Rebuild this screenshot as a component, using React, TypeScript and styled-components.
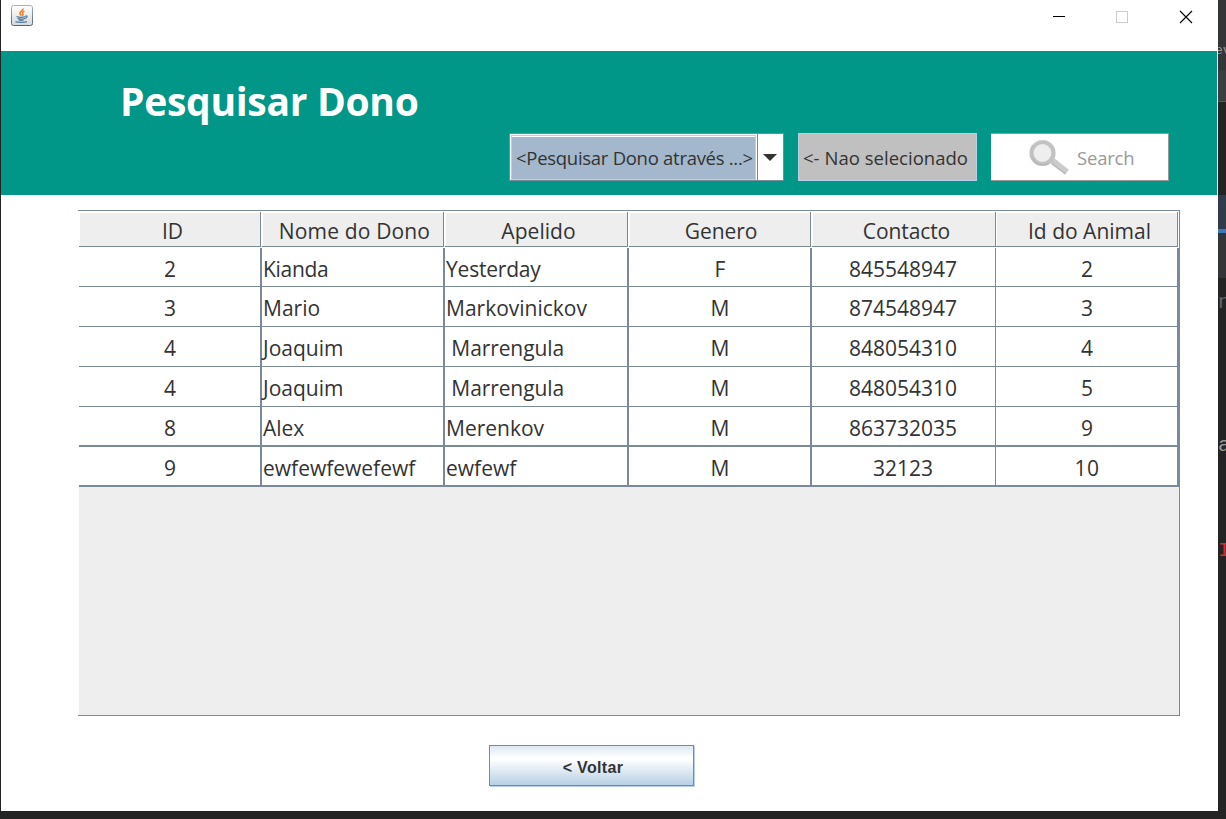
import React from "react";
import styled, { createGlobalStyle } from "styled-components";

const LINE = "#7a8a99";
const INK = "#333333";
const UI = `"Open Sans", "Noto Sans", sans-serif`;

const GlobalStyle = createGlobalStyle`
  *, *::before, *::after { box-sizing: border-box; }
  html, body { margin: 0; padding: 0; overflow: hidden; background: #242424; }
`;

const Desktop = styled.div`
  display: grid;
  grid-template-columns: 1217px 8px;
  width: 1226px;
  height: 819px;
  padding-left: 1px;
  background: #242424;
  font-family: ${UI};
  color: ${INK};
`;

const Window = styled.main`
  display: flex;
  flex-direction: column;
  height: 811px;
  background: #fff;
`;

const TitleBar = styled.header`
  display: flex;
  justify-content: space-between;
  height: 51px;
  padding: 5px 23px 0 10px;
`;

const WindowControls = styled.div`
  display: grid;
  grid-template-columns: 63px 64px 18px;
  padding-top: 3px;
`;

const Glyph = styled.svg`
  display: block;
  flex: none;
`;

const Banner = styled.section`
  display: flex;
  flex-direction: column;
  width: 1216px;
  height: 144px;
  background: #009688;
`;

const Title = styled.h1`
  margin: 22px 0 0 119px;
  height: 60px;
  font-size: 39px;
  line-height: 56px;
  font-weight: 700;
  letter-spacing: -0.3px;
  white-space: nowrap;
  color: #fff;
`;

const Toolbar = styled.div`
  display: flex;
  height: 48px;
  padding-left: 508px;
  font-size: 18.5px;
`;

const Combo = styled.div`
  display: flex;
  width: 275px;
  border: 1px solid ${LINE};
  background: #fff;
`;

const ComboValue = styled.div`
  display: flex;
  align-items: center;
  width: 245px;
  margin: 1px 1px 0 1px;
  padding-left: 4px;
  border: 1px solid #b8cfe5;
  box-shadow: inset 0 1px 0 #fff;
  background: #a3b8cc;
`;

const ComboArrow = styled.div`
  display: flex;
  align-items: center;
  justify-content: center;
  width: 26px;
  padding-right: 1px;
  border-left: 1px solid ${LINE};
`;

const Status = styled.div`
  display: flex;
  align-items: center;
  width: 179px;
  margin-left: 14px;
  padding-left: 4px;
  border: 1px solid #b8cfe5;
  background: #c0c0c0;
`;

const SearchButton = styled.button`
  display: flex;
  align-items: center;
  width: 178px;
  margin-left: 14px;
  padding: 0 0 0 38px;
  gap: 7px;
  border: 1px solid #999;
  border-left: 0;
  background: #fff;
  color: #999;
  font: inherit;
`;

const Text = styled.span<{ $track?: number }>`
  white-space: pre;
  letter-spacing: ${(p) => p.$track ?? 0}px;
`;

const TablePane = styled.section`
  width: 1102px;
  height: 506px;
  margin: 15px 0 0 77px;
  padding-left: 1px;
  border: solid ${LINE};
  border-width: 1px 1px 1px 0;
  background: linear-gradient(#eee, #eee) 1px 0 no-repeat #fff;
  font-size: 21px;
`;

const columns = "183px 183px 184px 183px 184px 183px";

const HeadRow = styled.div`
  display: grid;
  grid-template-columns: ${columns};
  height: 37px;
  padding: 1px 0;
  background: #fff;
`;

const HeadCell = styled.div<{ $gap: number; $indent: number }>`
  display: flex;
  align-items: center;
  justify-content: center;
  margin-right: ${(p) => p.$gap}px;
  padding: 3px 0 0 ${(p) => p.$indent}px;
  border-right: 1px solid ${LINE};
  border-bottom: 1px solid ${LINE};
  background: #eee;
  box-shadow: inset 1px 1px 0 #fff;
`;

const Row = styled.div<{ $height: number; $rule: number }>`
  display: grid;
  grid-template-columns: ${columns};
  height: ${(p) => p.$height}px;
  border-bottom: ${(p) => p.$rule}px solid ${LINE};
  background: #fff;
`;

const Cell = styled.div<{ $left: boolean; $rule: number }>`
  display: flex;
  justify-content: ${(p) => (p.$left ? "flex-start" : "center")};
  padding: ${(p) => (p.$rule === 1 ? "4px 2px 0 1px" : "4px 0 0 1px")};
  border-right: ${(p) => p.$rule}px solid ${LINE};
  line-height: 34px;
`;

const Footer = styled.footer`
  display: flex;
  padding: 29px 0 0 488px;
`;

const BackButton = styled.button`
  width: 205px;
  height: 41px;
  padding: 4px 0 0 3px;
  border: 1px solid ${LINE};
  box-shadow: 1px 1px 0 #b8cfe5;
  background: linear-gradient(#dde8f3 0%, #fff 30%, #fff 34%, #b8cfe5 100%);
  color: ${INK};
  font: bold 16px "Liberation Sans", sans-serif;
  letter-spacing: 0.35px;
`;

const Backdrop = styled.aside`
  display: grid;
  grid-template-rows: 36px 34px 32px 93px 34px 4px 45px 541px;
  width: 8px;
  overflow: hidden;
`;

const Strip = styled.div<{ $fill: string; $top?: number }>`
  overflow: hidden;
  background: ${(p) => p.$fill};
  padding-top: ${(p) => p.$top ?? 0}px;
  border-bottom: ${(p) => (p.$fill === "#3b3d40" ? "1px solid #55585a" : "0")};
`;

const Code = styled.div<{ $ink: string; $height: number; $size?: number; $shift?: number }>`
  height: ${(p) => p.$height}px;
  margin-left: ${(p) => p.$shift ?? 0}px;
  color: ${(p) => p.$ink};
  font: ${(p) => p.$size ?? 21}px/24px "Liberation Mono", monospace;
`;

const headings = [
  { label: "ID", indent: 6, track: 0 },
  { label: "Nome do Dono", indent: 4, track: 0.15 },
  { label: "Apelido", indent: 5, track: 0.05 },
  { label: "Genero", indent: 3, track: -0.1 },
  { label: "Contacto", indent: 6, track: -0.1 },
  { label: "Id do Animal", indent: 6, track: 0 },
];

const rows = [
  ["2", "Kianda", "Yesterday", "F", "845548947", "2"],
  ["3", "Mario", "Markovinickov", "M", "874548947", "3"],
  ["4", "Joaquim", " Marrengula", "M", "848054310", "4"],
  ["4", "Joaquim", " Marrengula", "M", "848054310", "5"],
  ["8", "Alex", "Merenkov", "M", "863732035", "9"],
  ["9", "ewfewfewefewf", "ewfewf", "M", "32123", "10"],
];

const tracking: Record<string, number> = { Kianda: -0.3, Yesterday: -0.2, " Marrengula": -0.1, "10": 0.5 };

const JavaIcon = () => (
  <Glyph width="22" height="21" viewBox="0 0 22 21">
    <defs>
      <linearGradient id="tile" x2="0" y2="1">
        <stop offset="0" stopColor="#fff" />
        <stop offset="1" stopColor="#d5dade" />
      </linearGradient>
      <linearGradient id="edge" x2="0" y2="1">
        <stop offset="0" stopColor="#a9b2ba" />
        <stop offset="1" stopColor="#4d6579" />
      </linearGradient>
    </defs>
    <rect x=".5" y=".5" width="21" height="20" rx="2" fill="url(#tile)" stroke="url(#edge)" />
    <path d="M12 3.500c.6 2.300-3.400 3-3 5 .2 1 1 1.500 1.400 2.200M13.500 6.200c-2 .6-2.500 1.600-1.600 2.600 .4.700 0 1.300-.6 1.800" fill="none" stroke="#ee7f22" strokeWidth="1.600" />
    <path d="M5.500 11.500c3 1 7 .8 9 0M14.500 11c2.500-.5 1.800 2-.8 2.600M6.500 13.400c2 .9 5 .9 7.200.1M7.500 15c2 .7 3.500.6 5.200 0M4.500 16.600c2 1 9 1 11.500 0" fill="none" stroke="#557c9e" strokeWidth="1.200" />
  </Glyph>
);

const Magnifier = () => (
  <Glyph width="41" height="36" viewBox="0 0 41 36">
    <path d="M23.500 21.500L38 33" stroke="#cbcbcb" strokeWidth="6" />
    <path d="M22.500 24.500L36.500 35" stroke="#b5b5b5" strokeWidth="1.500" />
    <circle cx="13.500" cy="14" r="11" fill="#eee" stroke="#c2c2c2" strokeWidth="4.200" />
    <path d="M3.200 19a12 12 0 0 0 16 6" fill="none" stroke="#b3b3b3" strokeWidth="1" />
    <path d="M4 6a12.500 12.500 0 0 1 14-4" fill="none" stroke="#d8d8d8" strokeWidth="1" />
  </Glyph>
);

export default function App() {
  return (
    <Desktop>
      <GlobalStyle />
      <Window>
        <TitleBar>
          <JavaIcon />
          <WindowControls>
            <Glyph width="18" height="18" viewBox="0 0 18 18">
              <path d="M3 8.500h12" stroke="#000" />
            </Glyph>
            <Glyph width="18" height="18" viewBox="0 0 18 18">
              <rect x="3.500" y="3.500" width="11" height="11" fill="none" stroke="#ccc" />
            </Glyph>
            <Glyph width="18" height="18" viewBox="0 0 18 18">
              <path d="M3 3l12 12M15 3L3 15" stroke="#000" strokeWidth="1.100" />
            </Glyph>
          </WindowControls>
        </TitleBar>
        <Banner>
          <Title>Pesquisar Dono</Title>
          <Toolbar>
            <Combo>
              <ComboValue>
                <Text $track={-0.28}>{"<Pesquisar Dono através ...>"}</Text>
              </ComboValue>
              <ComboArrow>
                <Glyph width="14" height="7" viewBox="0 0 14 7">
                  <path d="M0 0h14L7 7z" fill={INK} />
                </Glyph>
              </ComboArrow>
            </Combo>
            <Status>
              <Text $track={0.03}>{"<- Nao selecionado"}</Text>
            </Status>
            <SearchButton>
              <Magnifier />
              <Text $track={-0.2}>Search</Text>
            </SearchButton>
          </Toolbar>
        </Banner>
        <TablePane>
          <HeadRow>
            {headings.map((h, i) => (
              <HeadCell key={h.label} $gap={i === 4 ? 0 : 1} $indent={h.indent}>
                <Text $track={h.track}>{h.label}</Text>
              </HeadCell>
            ))}
          </HeadRow>
          {rows.map((row, r) => (
            <Row key={r} $height={r === 0 ? 39 : 40} $rule={r > 3 ? 2 : 1}>
              {row.map((value, c) => (
                <Cell key={c} $left={c === 1 || c === 2} $rule={c === 4 ? 1 : 2}>
                  <Text $track={tracking[value]}>{value}</Text>
                </Cell>
              ))}
            </Row>
          ))}
        </TablePane>
        <Footer>
          <BackButton>{"< Voltar"}</BackButton>
        </Footer>
      </Window>
      <Backdrop>
        <Strip $fill="#333538" />
        <Strip $fill="#333538" $top={3}>
          <Code $ink="#a09a90" $height={24} $size={13} $shift={-3}>ev</Code>
        </Strip>
        <Strip $fill="#3b3d40" />
        <Strip $fill="#242424" />
        <Strip $fill="#313c4a" />
        <Strip $fill="#4078b8" />
        <Strip $fill="#333538" />
        <Strip $fill="#242424" $top={13}>
          <Code $ink="#666" $height={143}>n</Code>
          <Code $ink="#999" $height={105}>a</Code>
          <Code $ink="#d03030" $height={40}>I</Code>
        </Strip>
      </Backdrop>
    </Desktop>
  );
}
